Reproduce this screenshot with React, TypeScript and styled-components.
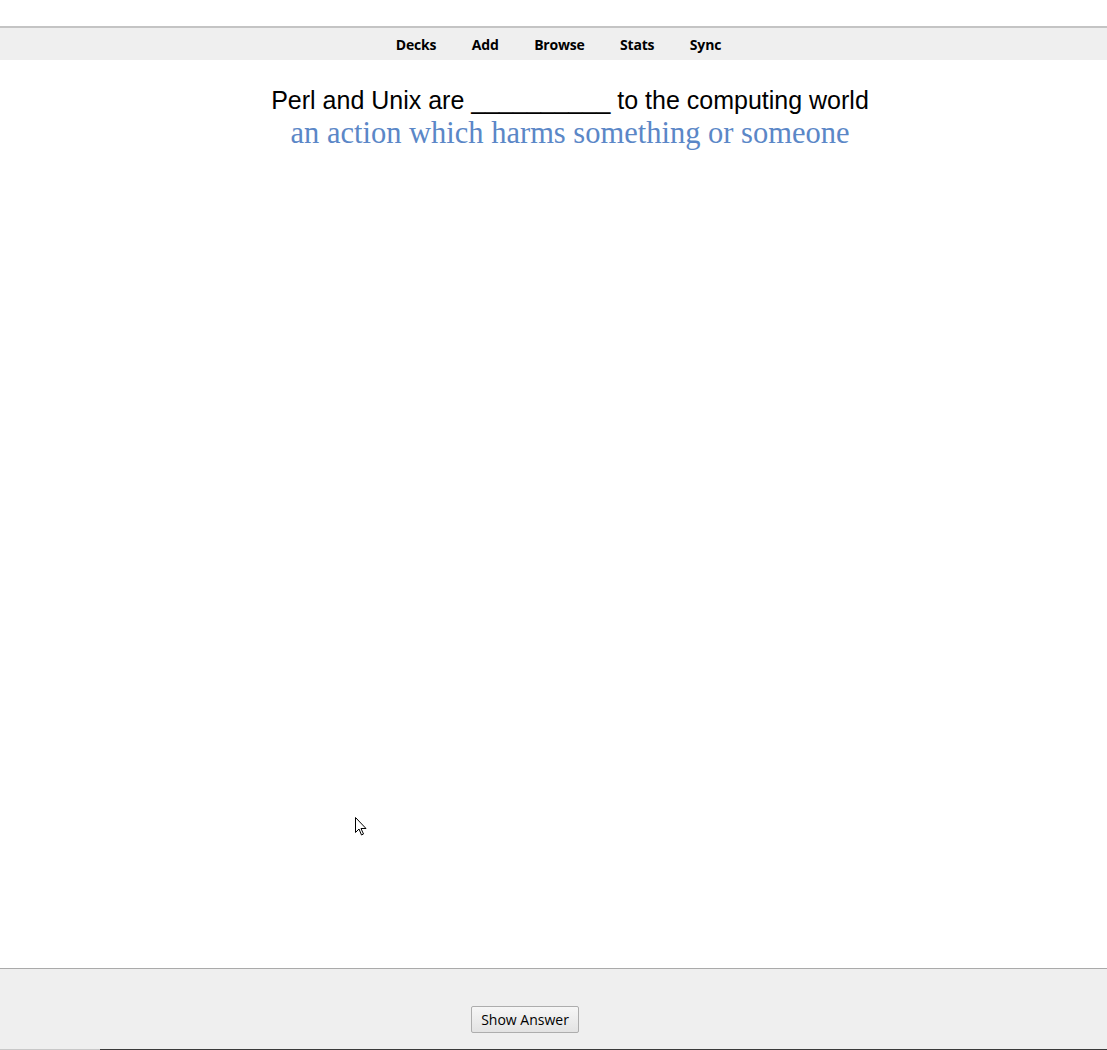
import React from "react";
import styled, { createGlobalStyle } from "styled-components";

const Global = createGlobalStyle`
  html, body { margin: 0; padding: 0; background: #fff; }
  body { width: 1107px; height: 1050px; overflow: hidden; }
  #root { height: 1050px; }
`;

const Page = styled.div`
  position: relative;
  height: 1050px;
  display: flex;
  flex-direction: column;
`;

const TopGap = styled.div`
  height: 26px;
  background: #fff;
`;

const Toolbar = styled.nav`
  height: 32px;
  border-top: 2px solid #c4c4c4;
  background: #efefef;
  display: flex;
  justify-content: center;
  align-items: center;
  gap: 35.5px;
  padding-left: 10px;
  font-family: "Open Sans", "Noto Sans", sans-serif;
  font-weight: 700;
  font-size: 14px;
  color: #000;
`;

const NavLink = styled.span`
  letter-spacing: -0.2px;
`;

const Card = styled.main`
  flex: 1;
  display: flex;
  flex-direction: column;
  align-items: center;
  padding-top: 25px;
  padding-left: 33px;
`;

const Question = styled.div`
  font-family: "Liberation Sans", Arial, sans-serif;
  font-size: 25px;
  line-height: 30px;
  color: #000;
`;

const Hint = styled.div`
  font-family: "Liberation Serif", serif;
  font-size: 30.5px;
  line-height: 36px;
  color: #5b87c7;
`;

const Bottom = styled.footer`
  height: 81px;
  border-top: 1px solid #aaa;
  background: #efefef;
  display: flex;
  justify-content: center;
  align-items: flex-end;
  padding-bottom: 16px;
  padding-right: 57px;
  box-sizing: border-box;
`;

const Edge = styled.div`
  height: 1px;
  display: flex;
`;

const EdgePart = styled.div<{ $dark?: boolean }>`
  height: 1px;
  flex: ${(p) => (p.$dark ? "1" : "0 0 100px")};
  background: ${(p) => (p.$dark ? "#3a3a3a" : "#c8c8c8")};
`;

const Button = styled.button`
  height: 27px;
  width: 108px;
  padding: 0;
  border: 1px solid #adadad;
  border-radius: 2px;
  background: linear-gradient(#f6f6f6, #e3e3e3);
  font-family: "Open Sans", "Noto Sans", sans-serif;
  font-size: 14px;
  color: #000;
`;

const Cursor = styled.svg`
  position: absolute;
  left: 355px;
  top: 817px;
`;

export default function App() {
  return (
    <Page>
      <Global />
      <TopGap />
      <Toolbar>
        <NavLink>Decks</NavLink>
        <NavLink>Add</NavLink>
        <NavLink>Browse</NavLink>
        <NavLink>Stats</NavLink>
        <NavLink>Sync</NavLink>
      </Toolbar>
      <Card>
        <Question>Perl and Unix are __________ to the computing world</Question>
        <Hint>an action which harms something or someone</Hint>
      </Card>
      <Bottom>
        <Button>Show Answer</Button>
      </Bottom>
      <Edge>
        <EdgePart />
        <EdgePart $dark />
      </Edge>
      <Cursor width="13" height="20" viewBox="0 0 13 20">
        <path d="M0.5 0.5 L0.5 15.5 L4 12 L6.5 18 L8.5 17 L6 11.5 L11 11.5 Z" fill="#fff" stroke="#000" strokeWidth="1" />
      </Cursor>
    </Page>
  );
}
